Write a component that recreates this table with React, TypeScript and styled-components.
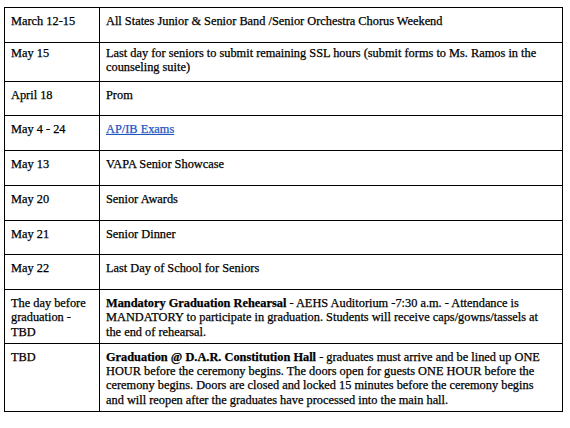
import React from 'react';
import styled, {createGlobalStyle} from 'styled-components';

type Row = {
    date: React.ReactNode,
    event: React.ReactNode,
    tight?: boolean
};

const GlobalStyle = createGlobalStyle`
  html, body {
    margin: 0;
    background: #fff;
  }
  body {
    font-family: "Liberation Serif", "Times New Roman", serif;
    color: #000;
  }
`;

const Page = styled.div`
  padding: 7px 0 0 4px;
`;

const Table = styled.div`
  display: grid;
  grid-template-columns: 95px 463px;
  width: fit-content;
  border-left: 1px solid #000;
  border-top: 1px solid #000;
`;

const Cell = styled.div<{ $tight?: boolean }>`
  box-sizing: border-box;
  min-height: 34.7px;
  padding: ${p => p.$tight ? '3px 4px 6.5px 6px' : '6px 4px 4px 6px'};
  border-right: 1px solid #000;
  border-bottom: 1px solid #000;
  font-size: 12.35px;
  line-height: 14.3px;
  white-space: nowrap;
  color: #000;
  -webkit-text-stroke: 0.25px #000;

  b {
    font-weight: 700;
  }
`;

const Link = styled.a`
  color: #1f55c0;
  text-decoration: underline;
  -webkit-text-stroke: 0.25px #1f55c0;
`;

const rows: Row[] = [
    {date: 'March 12-15', event: 'All States Junior & Senior Band /Senior Orchestra Chorus Weekend'},
    {
        date: 'May 15',
        event: <>Last day for seniors to submit remaining SSL hours (submit forms to Ms. Ramos in the<br/>counseling suite)</>,
        tight: true
    },
    {date: 'April 18', event: 'Prom'},
    {date: 'May 4 - 24', event: <Link href="#">AP/IB Exams</Link>},
    {date: 'May 13', event: 'VAPA Senior Showcase'},
    {date: 'May 20', event: 'Senior Awards'},
    {date: 'May 21', event: 'Senior Dinner'},
    {date: 'May 22', event: 'Last Day of School for Seniors'},
    {
        date: <>The day before<br/>graduation -<br/>TBD</>,
        event: <>
            <b>Mandatory Graduation Rehearsal</b> - AEHS Auditorium -7:30 a.m. - Attendance is<br/>
            MANDATORY to participate in graduation. Students will receive caps/gowns/tassels at<br/>
            the end of rehearsal.
        </>
    },
    {
        date: 'TBD',
        event: <>
            <b>Graduation @ D.A.R. Constitution Hall</b> - graduates must arrive and be lined up ONE<br/>
            HOUR before the ceremony begins. The doors open for guests ONE HOUR before the<br/>
            ceremony begins. Doors are closed and locked 15 minutes before the ceremony begins<br/>
            and will reopen after the graduates have processed into the main hall.
        </>
    }
];

function App() {
    return (
        <>
            <GlobalStyle/>
            <Page>
                <Table>
                    {rows.map((row, i) => (
                        <React.Fragment key={i}>
                            <Cell $tight={row.tight}>{row.date}</Cell>
                            <Cell $tight={row.tight}>{row.event}</Cell>
                        </React.Fragment>
                    ))}
                </Table>
            </Page>
        </>
    )
}

export default App;
